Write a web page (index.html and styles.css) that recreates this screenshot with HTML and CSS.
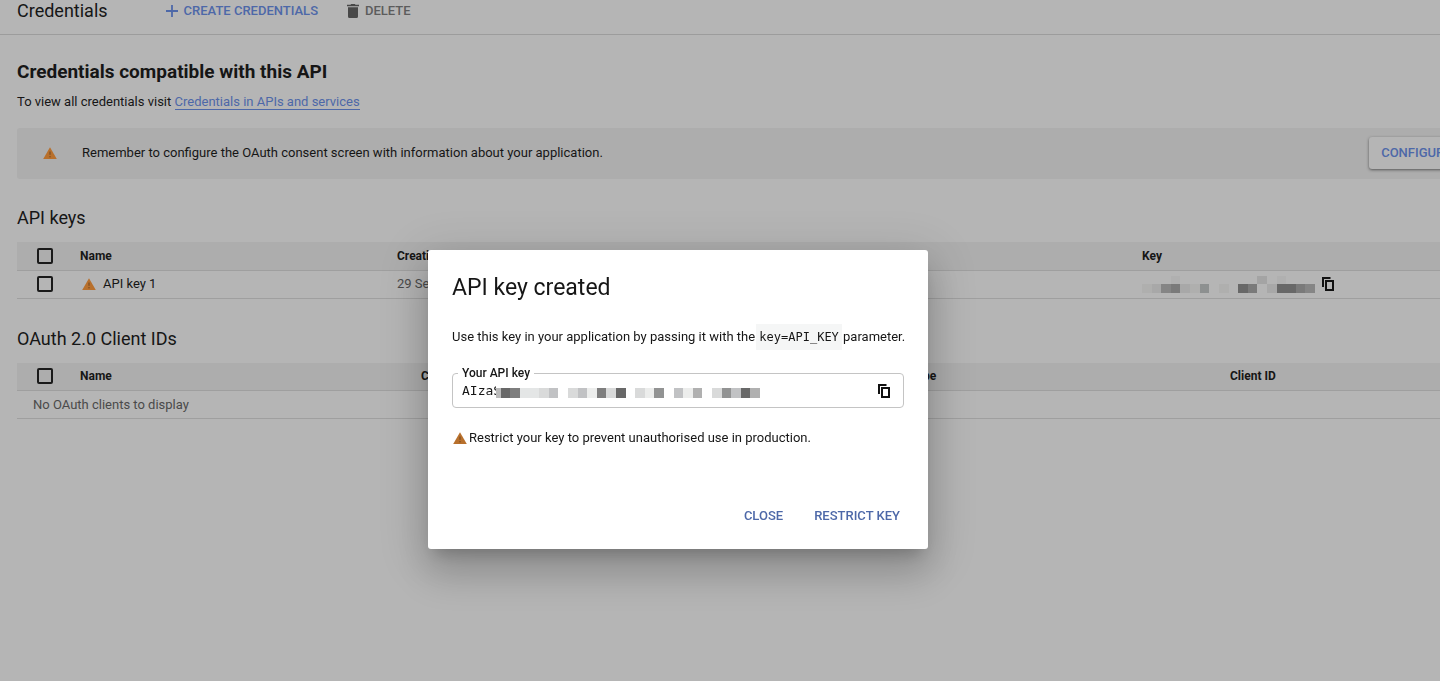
FILE: index.html
```
<!DOCTYPE html>
<html lang="en-GB">
<head>
<meta charset="UTF-8">
<title>Credentials</title>
<link rel="stylesheet" href="styles.css">
</head>
<body>
<svg class="defs" width="0" height="0">
    <symbol id="warn" viewBox="0 0 14 12"><path d="M7 0.3 13.8 12H.2z" fill="#b8702c"/><path d="M7 4.5v3.3M7 9v1.400" stroke="#6f451f" stroke-width="1"/></symbol>
    <symbol id="copy" viewBox="0 0 14 16"><path d="M2 11V2h7.500" fill="none" stroke="#111" stroke-width="2"/><path d="M5 5h7v9H5z" fill="none" stroke="#111" stroke-width="2"/></symbol>
</svg>

<header class="topbar">
    <h1>Credentials</h1>
    <button class="tool create" type="button"><svg width="12" height="12" viewBox="0 0 12 12"><path d="M6 0v12M0 6h12" stroke="#4d68a8" stroke-width="1.8"/></svg>CREATE CREDENTIALS</button>
    <button class="tool delete" type="button"><svg width="12" height="14" viewBox="0 0 12 14"><path d="M0 .8h3.5L4.200 0h3.600l.7.800H12v1.500H0zM1 3.300h10V12.500q0 1.500-1.500 1.500h-7Q1 14 1 12.500z" fill="#484848"/></svg>DELETE</button>
</header>

<main>
    <h2 class="title">Credentials compatible with this API</h2>
    <p class="intro">To view all credentials visit <a href="#">Credentials in APIs and services</a></p>

    <div class="notice">
        <svg class="warn"><use href="#warn"/></svg>
        <p>Remember to configure the OAuth consent screen with information about your application.</p>
        <button type="button">CONFIGURE CONSENT SCREEN</button>
    </div>

    <h3>API keys</h3>
    <table class="keys">
        <colgroup><col class="c-check"><col class="c-name"><col class="c-date"><col class="c-limit"><col></colgroup>
        <thead>
            <tr>
                <th><input type="checkbox" aria-label="Select all API keys"></th>
                <th>Name</th>
                <th>Creation date</th>
                <th>Restrictions</th>
                <th>Key</th>
            </tr>
        </thead>
        <tbody>
            <tr>
                <td><input type="checkbox" aria-label="Select API key 1"></td>
                <td><span class="name"><svg class="warn"><use href="#warn"/></svg>API key 1</span></td>
                <td>29 Sept</td>
                <td>None</td>
                <td>
                    <span class="secret">
                        <svg width="173" height="17" viewBox="0 0 18 17" preserveAspectRatio="none" shape-rendering="crispEdges">
                            <path d="M3 0h1v8H3zM14 0h1v8h-1z" fill="#b0b0b0"/>
                            <path d="M12 0h1v8h-1z" fill="#a4a4a4"/>
                            <path d="M0 8h1v9H0zM5 8h1v9H5zM8 8h1v9H8z" fill="#afafae"/>
                            <path d="M1 8h1v9H1zM4 8h1v9H4zM13 8h1v9h-1z" fill="#a8a8a8"/>
                            <path d="M2 8h1v9H2zM17 8h1v9h-1z" fill="#858585"/>
                            <path d="M3 8h1v9H3zM11 8h1v9h-1zM16 8h1v9h-1z" fill="#7a7a7a"/>
                            <path d="M6 8h1v9H6z" fill="#8d9090"/>
                            <path d="M10 8h1v9h-1zM14 8h2v9h-2z" fill="#686868"/>
                        </svg>
                        <button class="copy" type="button" aria-label="Copy key"><svg width="14" height="16"><use href="#copy"/></svg></button>
                    </span>
                </td>
            </tr>
        </tbody>
    </table>

    <h3>OAuth 2.0 Client IDs</h3>
    <table class="clients">
        <colgroup><col class="c-check"><col class="c-name"><col class="c-date"><col class="c-type"><col></colgroup>
        <thead>
            <tr>
                <th><input type="checkbox" aria-label="Select all OAuth clients"></th>
                <th>Name</th>
                <th>Creation date</th>
                <th>Type</th>
                <th>Client ID</th>
            </tr>
        </thead>
        <tbody>
            <tr><td class="empty" colspan="5">No OAuth clients to display</td></tr>
        </tbody>
    </table>
</main>

<div class="overlay">
    <section class="dialog" role="dialog" aria-labelledby="dialog-title">
        <h2 id="dialog-title">API key created</h2>
        <p class="usage">Use this key in your application by passing it with the <code>key=API_KEY</code> parameter.</p>
        <fieldset class="field">
            <legend><label for="api-key">Your API key</label></legend>
            <input id="api-key" type="text" value="AIzaS" readonly>
            <svg class="mask" width="264" height="10" viewBox="0 0 275 10" preserveAspectRatio="none" shape-rendering="crispEdges">
                <path d="M0 0h5v10H0z" fill="#bbb"/>
                <path d="M5 0h10v10H5zM125 0h10v10h-10zM255 0h10v10h-10z" fill="#686868"/>
                <path d="M15 0h10v10H15zM105 0h10v10h-10z" fill="#7e7e7e"/>
                <path d="M25 0h20v10H25z" fill="#e4e6e6"/>
                <path d="M45 0h10v10H45zM75 0h10v10H75zM115 0h10v10h-10zM145 0h10v10h-10zM225 0h10v10h-10z" fill="#d9dada"/>
                <path d="M55 0h10v10H55zM85 0h10v10H85zM185 0h10v10h-10zM245 0h10v10h-10z" fill="#c1c2c4"/>
                <path d="M95 0h10v10H95zM155 0h10v10h-10zM195 0h10v10h-10z" fill="#ecedec"/>
                <path d="M165 0h10v10h-10zM235 0h10v10h-10z" fill="#929393"/>
                <path d="M205 0h10v10h-10zM265 0h10v10h-10z" fill="#b0b0b0"/>
            </svg>
            <button class="copy" type="button" aria-label="Copy API key"><svg width="14" height="16"><use href="#copy"/></svg></button>
        </fieldset>
        <p class="advice"><svg class="warn"><use href="#warn"/></svg>Restrict your key to prevent unauthorised use in production.</p>
        <div class="actions">
            <button type="button">CLOSE</button>
            <button type="button">RESTRICT KEY</button>
        </div>
    </section>
</div>
</body>
</html>
```
FILE: styles.css
```
*{box-sizing:border-box;}
html,body{overflow:hidden;height:100%;}
body,h1,h2,h3,p,fieldset{margin:0;padding:0;}
body{color:#161616;background:#b5b5b5;font:13px/20px Roboto,"Liberation Sans",sans-serif;}
button{border:0;padding:0;background:none;font:500 13px/20px Roboto,"Liberation Sans",sans-serif;color:#4d68a8;cursor:pointer;white-space:nowrap;}
svg{flex:none;}
.defs{position:absolute;}
.warn{width:14px;height:12px;}

.topbar{display:flex;align-items:center;padding:1px 17px 13px;border-bottom:1px solid #9c9c9c;}
.topbar h1{font-size:18px;font-weight:400;line-height:20px;margin-right:58px;}
.tool{display:flex;align-items:center;gap:6px;margin-right:29px;}
.tool.delete{color:#5c5c5c;}

/* the content is wider than the window */
main{padding:25px 0 0 17px;margin-right:-153px;}
.title{font-size:19px;font-weight:700;line-height:24px;}
.intro{margin-top:8px;}
.intro a{color:#4d68a8;text-decoration:none;border-bottom:1px solid #4d68a8;}

.notice{display:flex;align-items:center;margin:16px 0 27px;padding:9px 16px 10px 26px;background:#adadad;border-radius:3px;}
.notice p{flex:1;margin-left:25px;}
.notice button{padding:6px 12px;background:#b5b5b5;border-radius:3px;box-shadow:0 1px 3px rgba(0,0,0,.5);}

h3{font-size:18px;font-weight:400;line-height:24px;}
table{width:100%;table-layout:fixed;border-collapse:collapse;margin:12px 0 28px;}
th,td{height:28px;padding:0;text-align:left;vertical-align:middle;border-bottom:1px solid #9f9f9f;}
th{background:#adadad;font-size:12px;font-weight:700;}
td{color:#4a4a4a;}
th input,td input{display:block;appearance:none;width:16px;height:16px;margin:0 0 0 20px;border:2px solid #1a1a1a;border-radius:2px;}
.c-check{width:63px;}
.c-name{width:317px;}
.c-date{width:400px;}
.c-limit{width:345px;}
.clients .c-name{width:341px;}
.clients .c-date{width:489px;}
.c-type{width:320px;}
.name{display:flex;align-items:center;gap:7px;padding-left:2px;color:#161616;}
.secret{display:flex;align-items:center;gap:6px;}
td.empty{padding-left:16px;}
.copy{display:flex;}

.overlay{position:fixed;inset:0;display:flex;justify-content:center;align-items:flex-start;padding:250px 84px 0 0;}
.dialog{width:500px;padding:24px 24px 23px;background:#fff;border-radius:3px;box-shadow:0 11px 15px -7px rgba(0,0,0,.2),0 24px 38px 3px rgba(0,0,0,.14),0 9px 46px 8px rgba(0,0,0,.12);}
.dialog h2{font-size:23px;font-weight:400;line-height:28px;}
.usage{margin-top:22px;line-height:26px;white-space:nowrap;}
.usage code{margin:0 -2px;padding:6px 3px;background:#f5f6f6;font:12px "DejaVu Sans Mono","Liberation Mono",monospace;}
.field{display:flex;align-items:center;margin-top:15px;padding:1px 12px 7px 9px;border:1px solid #c4c4c4;border-radius:4px;}
.field legend{padding:0 4px;margin-left:-4px;font-size:12px;line-height:16px;font-weight:500;}
.field input{width:34px;padding:0;border:0;outline:0;background:none;font:13px/18px "DejaVu Sans Mono","Liberation Mono",monospace;color:#161616;}
.field .mask{margin-top:4px;}
.field .copy{margin-left:auto;}
.advice{display:flex;align-items:center;gap:2px;margin-top:20px;padding-left:1px;}
.actions{display:flex;justify-content:flex-end;gap:31px;margin-top:58px;padding-right:4px;}
```
